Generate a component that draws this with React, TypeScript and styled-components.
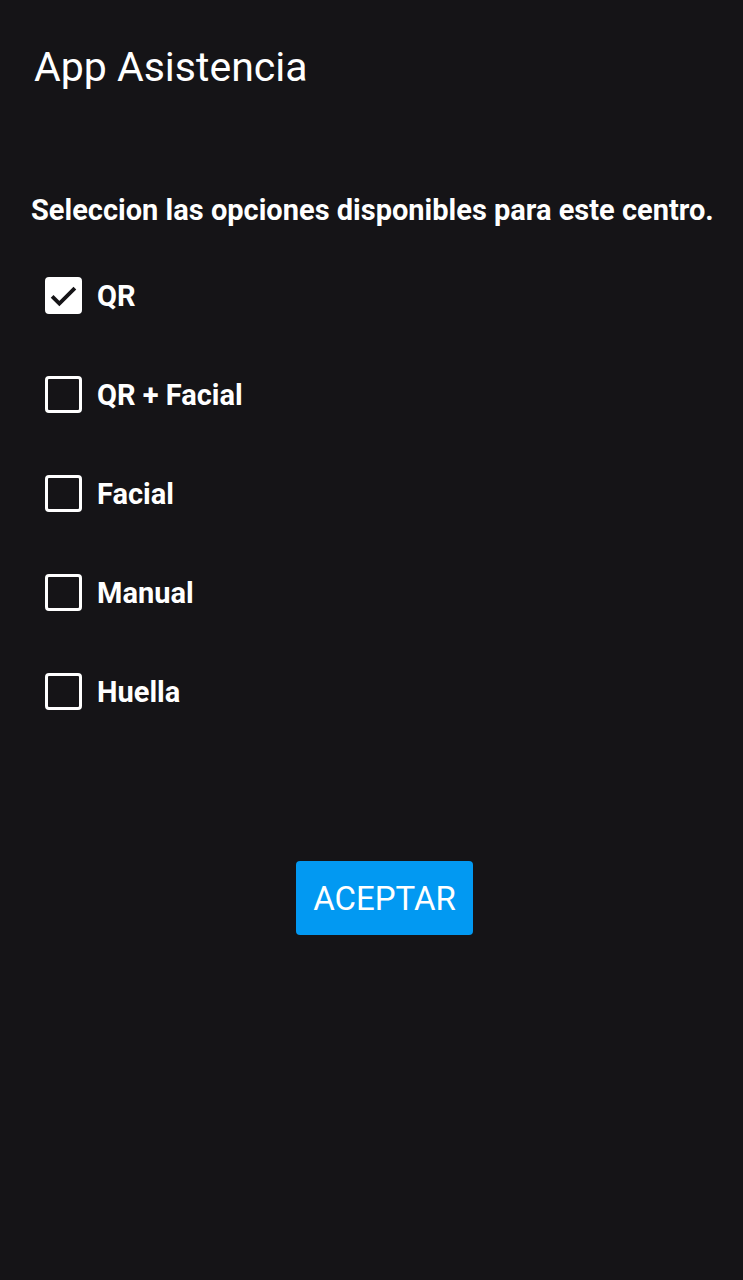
import React, { useState } from "react";
import styled, { createGlobalStyle } from "styled-components";

const Global = createGlobalStyle`
  html, body { margin: 0; padding: 0; background: #151417; }
  body { font-family: Roboto, "Liberation Sans", sans-serif; color: #fff; }
`;

const Page = styled.div`
  width: 743px;
  min-height: 1280px;
  background: #151417;
  display: flex;
  flex-direction: column;
  box-sizing: border-box;
`;

const Header = styled.header`
  height: 136px;
  padding: 45px 0 0 34px;
  box-sizing: border-box;
`;

const Title = styled.h1`
  margin: 0;
  font-family: Roboto, "Liberation Sans", sans-serif;
  font-weight: 400;
  font-size: 41px;
  line-height: 44px;
  color: #ffffff;
`;

const Content = styled.main`
  padding: 58px 0 0 31px;
  display: flex;
  flex-direction: column;
`;

const Prompt = styled.p`
  margin: 0;
  font-weight: 700;
  font-size: 29px;
  line-height: 32px;
  color: #ffffff;
  white-space: nowrap;
`;

const List = styled.div`
  display: flex;
  flex-direction: column;
  gap: 62px;
  margin-top: 51px;
  padding-left: 14px;
`;

const Row = styled.label`
  display: flex;
  align-items: center;
  gap: 15px;
  height: 37px;
  cursor: pointer;
`;

const Box = styled.span<{ $checked: boolean }>`
  width: 37px;
  height: 37px;
  box-sizing: border-box;
  border-radius: 4px;
  border: 3px solid #ffffff;
  background: ${(p) => (p.$checked ? "#ffffff" : "transparent")};
  display: flex;
  align-items: center;
  justify-content: center;
  flex-shrink: 0;
`;

const Label = styled.span`
  font-weight: 700;
  font-size: 29px;
  color: #ffffff;
`;

const ButtonRow = styled.div`
  display: flex;
  justify-content: center;
  margin-top: 151px;
  padding-right: 5px;
`;

const Button = styled.button`
  width: 177px;
  height: 74px;
  border: none;
  border-radius: 4px;
  background: #0299f2;
  color: #ffffff;
  font-family: Roboto, "Liberation Sans", sans-serif;
  font-size: 33px;
  font-weight: 400;
  padding: 0;
  cursor: pointer;
`;

const options = ["QR", "QR + Facial", "Facial", "Manual", "Huella"];

export default function App() {
  const [checked, setChecked] = useState<Record<string, boolean>>({ QR: true });
  return (
    <Page>
      <Global />
      <Header>
        <Title>App Asistencia</Title>
      </Header>
      <Content>
        <Prompt>Seleccion las opciones disponibles para este centro.</Prompt>
        <List>
          {options.map((o) => (
            <Row key={o} onClick={() => setChecked((c) => ({ ...c, [o]: !c[o] }))}>
              <Box $checked={!!checked[o]}>
                {checked[o] && (
                  <svg width="33" height="33" viewBox="0 0 24 24">
                    <path d="M3.2 12.6 L8.8 18.2 L20.8 6.2" fill="none" stroke="#151417" strokeWidth="3" />
                  </svg>
                )}
              </Box>
              <Label>{o}</Label>
            </Row>
          ))}
        </List>
        <ButtonRow>
          <Button>ACEPTAR</Button>
        </ButtonRow>
      </Content>
    </Page>
  );
}
